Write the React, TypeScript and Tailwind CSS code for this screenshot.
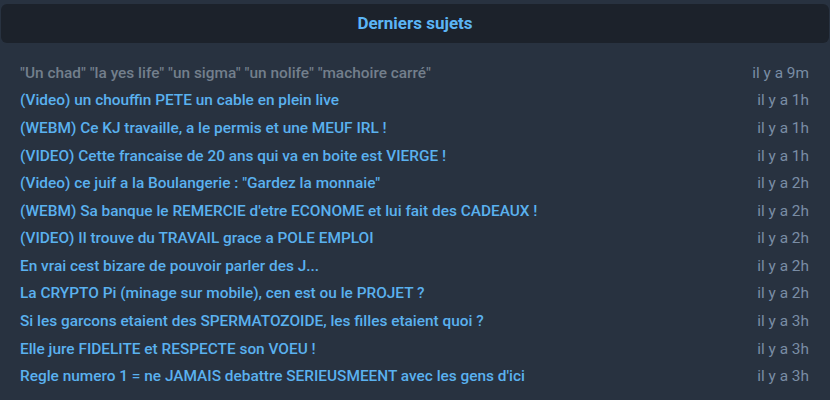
import React from "react";

interface Topic {
  title: string;
  time: string;
  read?: boolean;
}

const topics: Topic[] = [
  { title: "\"Un chad\" \"la yes life\" \"un sigma\" \"un nolife\" \"machoire carré\"", time: "il y a 9m", read: true },
  { title: "(Video) un chouffin PETE un cable en plein live", time: "il y a 1h" },
  { title: "(WEBM) Ce KJ travaille, a le permis et une MEUF IRL !", time: "il y a 1h" },
  { title: "(VIDEO) Cette francaise de 20 ans qui va en boite est VIERGE !", time: "il y a 1h" },
  { title: "(Video) ce juif a la Boulangerie : \"Gardez la monnaie\"", time: "il y a 2h" },
  { title: "(WEBM) Sa banque le REMERCIE d'etre ECONOME et lui fait des CADEAUX !", time: "il y a 2h" },
  { title: "(VIDEO) Il trouve du TRAVAIL grace a POLE EMPLOI", time: "il y a 2h" },
  { title: "En vrai cest bizare de pouvoir parler des J...", time: "il y a 2h" },
  { title: "La CRYPTO Pi (minage sur mobile), cen est ou le PROJET ?", time: "il y a 2h" },
  { title: "Si les garcons etaient des SPERMATOZOIDE, les filles etaient quoi ?", time: "il y a 3h" },
  { title: "Elle jure FIDELITE et RESPECTE son VOEU !", time: "il y a 3h" },
  { title: "Regle numero 1 = ne JAMAIS debattre SERIEUSMEENT avec les gens d'ici", time: "il y a 3h" },
];

const App: React.FC = (): React.ReactElement => {
  return (
    <div
      className="w-[830px] h-[400px] bg-[#283240] pt-[4px] px-[1px] overflow-hidden"
      style={{ fontFamily: "Roboto, 'Liberation Sans', sans-serif" }}
    >
      <div className="h-[39px] rounded-[6px] bg-[#1c222b] flex items-center justify-center">
        <h2 className="text-[17px] font-bold text-[#5bb5f5]">Derniers sujets</h2>
      </div>
      <ul className="pt-[16.5px] pl-[19px] pr-[20px]">
        {topics.map((t, i) => (
          <li key={i} className="flex justify-between h-[27.6px] items-center text-[15.4px]">
            <span className={t.read ? "font-medium text-[#737f8c]" : "font-medium text-[#5ab1ef]"}>{t.title}</span>
            <span className="text-[#7a8da5]">{t.time}</span>
          </li>
        ))}
      </ul>
    </div>
  );
};

export default App;
